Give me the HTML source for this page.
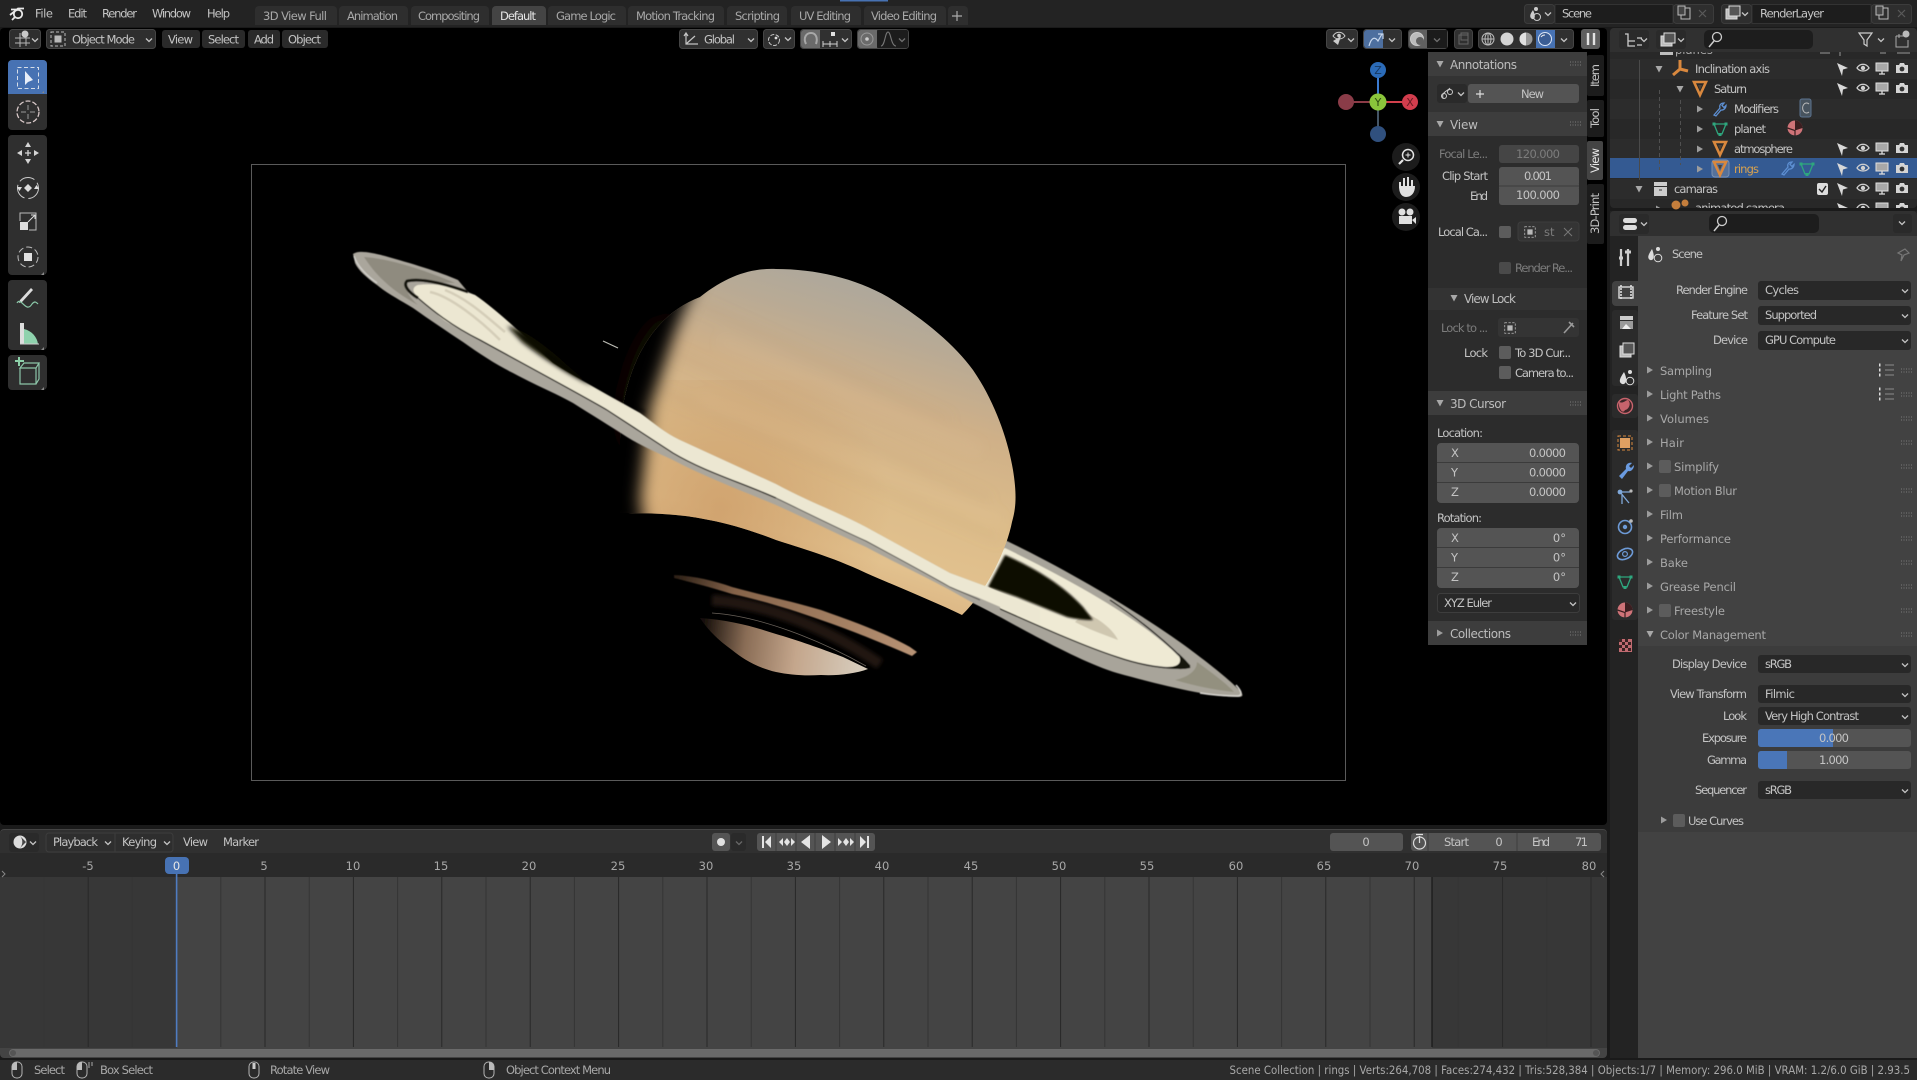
<!DOCTYPE html>
<html><head><meta charset="utf-8"><title>Blender</title>
<style>
html,body{margin:0;padding:0;background:#1a1a1a;width:1917px;height:1080px;overflow:hidden}
svg{display:block}
text{font-family:"DejaVu Sans","Liberation Sans",sans-serif;font-size:11.5px;fill:#c4c4c4}
.d{fill:#7c7c7c}.e{text-anchor:end}.m{text-anchor:middle}.b{fill:#a8a8a8}.w{fill:#e6e6e6}
.h{font-size:12px;fill:#bdbdbd}
</style></head><body>
<svg width="1917" height="1080" viewBox="0 0 1917 1080" xmlns="http://www.w3.org/2000/svg">
<defs>
<path id="chev" d="M-3-1.5L0 1.5 3-1.5" fill="none" stroke="#c4c4c4" stroke-width="1.3"/>
<path id="tr" d="M-3-3.5L3 0-3 3.5z" fill="#9c9c9c"/>
<path id="td" d="M-3.5-3H3.5L0 3.5z" fill="#a8a8a8"/>
<path id="grip" d="M0 0H11M0 3H11" stroke="#7a7a7a" stroke-width="1" stroke-dasharray="1 1.5" fill="none"/>
<g id="eye"><path d="M-6 0C-3-5 3-5 6 0C3 4 -3 4-6 0Z" fill="none" stroke="#d0d0d0" stroke-width="1.3"/><circle r="2.2" fill="#d0d0d0"/></g>
<g id="mon"><path d="M-6-5H6V3H-6Z" fill="#a8a8a8" stroke="#e0e0e0"/><path d="M-3 6H3M0 3V6" stroke="#ddd" stroke-width="1.3"/></g>
<g id="cam"><path d="M-6-3H-3L-2-5H2L3-3H6V5H-6Z" fill="#d4d4d4"/><circle cy="1" r="2.4" fill="#333"/></g>
<path id="arr" d="M-5-6L6-1 1 0.5 0 7Z" fill="#d8d8d8"/>
<g id="ntri"><path d="M-6-6H6L0 7Z" fill="none" stroke="#d9883e" stroke-width="2.6"/><path d="M-2-3H2L0 2Z" fill="#4a4038"/></g>
<g id="mesh"><path d="M-6-5H6L2 5H-2Z" fill="none" stroke="#2ea77e" stroke-width="1.3"/><rect x="-7.5" y="-6.5" width="3" height="3" fill="#2ea77e"/><rect x="4.5" y="-6.5" width="3" height="3" fill="#2ea77e"/><rect x="-1.5" y="4" width="3" height="3" fill="#2ea77e"/></g>
<g id="wr"><path d="M-5 6L1-1C0-4 2-6 5-6L3-3.5 5-1.5 7-3.5C7-.5 4 1.5 2 1L-3 7Z" fill="none" stroke="#5d8fd2" stroke-width="1.3" transform="translate(-1 0)"/></g>
<g id="list"><path d="M0 0H1.5M0 5H1.5M0 10H1.5" stroke="#ddd" stroke-width="3"/><path d="M6 0H15M6 5H15M6 10H15" stroke="#8c8c8c"/></g>
<g id="selbox"><path d="M-7-7H7V7H-7Z" fill="none" stroke="#bbb" stroke-dasharray="3 2"/><rect x="-3.5" y="-3.5" width="7" height="7" fill="#b9b9b9"/></g>
<g id="mouse"><rect x="-5" y="-8" width="10" height="16" rx="4.5" fill="none" stroke="#b4b4b4"/></g>
<g id="matl"><circle r="7.5" fill="#cf7378"/><path d="M0-7.5A7.5 7.5 0 0 1 7.5 0L0 2.5Z" fill="#3a1e20"/><path d="M-7.5 0L0 2.5V7.5" fill="none" stroke="#3a1e20" stroke-width="1.2"/></g>
<linearGradient id="pg" gradientUnits="userSpaceOnUse" x1="900" y1="280" x2="800" y2="610"><stop offset="0" stop-color="#aaa79e"/><stop offset=".16" stop-color="#b8aa95"/><stop offset=".36" stop-color="#cfb088"/><stop offset=".6" stop-color="#dcbc8a"/><stop offset=".8" stop-color="#e2c18e"/><stop offset="1" stop-color="#d5ab7a"/></linearGradient>
<radialGradient id="po" gradientUnits="userSpaceOnUse" cx="720" cy="510" r="170"><stop offset="0" stop-color="#c99762" stop-opacity=".7"/><stop offset="1" stop-color="#c99762" stop-opacity="0"/></radialGradient>
<linearGradient id="lg" gradientUnits="userSpaceOnUse" x1="700" y1="640" x2="860" y2="660"><stop offset="0" stop-color="#120c08"/><stop offset=".28" stop-color="#8a6d56"/><stop offset=".6" stop-color="#c4a68c"/><stop offset="1" stop-color="#d6cbbb"/></linearGradient>
<linearGradient id="sg" gradientUnits="userSpaceOnUse" x1="674" y1="575" x2="917" y2="652"><stop offset="0" stop-color="#2a1e15"/><stop offset=".25" stop-color="#86644a"/><stop offset="1" stop-color="#b89375"/></linearGradient>
<filter id="b12" x="-50%" y="-50%" width="200%" height="200%"><feGaussianBlur stdDeviation="12"/></filter>
<filter id="b8" x="-50%" y="-50%" width="200%" height="200%"><feGaussianBlur stdDeviation="8"/></filter>
<filter id="b4" x="-50%" y="-50%" width="200%" height="200%"><feGaussianBlur stdDeviation="6"/></filter>
<filter id="b2" x="-50%" y="-50%" width="200%" height="200%"><feGaussianBlur stdDeviation="2"/></filter>
<filter id="b15" x="-20%" y="-20%" width="140%" height="140%"><feGaussianBlur stdDeviation="1.5"/></filter>
<filter id="b1" x="-10%" y="-10%" width="120%" height="120%"><feGaussianBlur stdDeviation="1"/></filter>
<filter id="b05" x="-5%" y="-10%" width="110%" height="120%"><feGaussianBlur stdDeviation=".6"/></filter>
<clipPath id="pc"><path d="M620 440C620 390 640 320 700 297C728 275 752 268 776 269C815 269 855 278 888 297C925 320 955 345 973 370C995 402 1008 440 1013 470C1017 495 1016 508 1012 522C1007 548 988 590 962 615C935 602 905 590 866 573C830 556 800 548 776 540C750 530 730 524 709 520C690 516 670 513 620 513Z"/></clipPath>
<clipPath id="lc"><path d="M700 618C730 620 755 627 776 634C800 641 825 650 843 657L868 669C855 674 835 676 821 675C805 676 790 675 776 672C755 667 742 658 732 650C718 640 708 630 700 618Z"/></clipPath>
</defs>

<rect width="1917" height="1080" fill="#1a1a1a"/>
<!-- viewport -->
<rect x="0" y="28" width="1607" height="797" rx="4" fill="#000"/>
<rect x="251.5" y="164.5" width="1094" height="616" fill="none" stroke="#5a5a5a"/>

<!-- Saturn -->
<ellipse cx="652" cy="385" rx="26" ry="70" fill="#170b05" filter="url(#b12)" transform="rotate(15 652 385)"/>
<!-- right far ring -->
<g filter="url(#b05)">
<path d="M990 533C1060 565 1150 618 1200 657C1220 672 1235 685 1241 692Q1245 697 1238 697C1210 697 1160 685 1117 673C1080 662 1020 628 973 602Z" fill="#a8a49a"/>
<path d="M1197 662C1215 675 1228 685 1234 692C1215 690 1195 686 1175 680C1185 678 1197 672 1197 662Z" fill="#93907f"/>
<path d="M1236 685Q1245 695 1238 696C1225 696 1212 695 1200 693" fill="none" stroke="#d8d6d0" stroke-width="1.5"/>
<path d="M1005 548C1060 575 1130 612 1172 650C1182 660 1187 664 1180 667C1150 668 1120 658 1090 647C1050 632 1010 614 977 597L950 586L950 573Z" fill="#efead4"/>
<path d="M1085 612C1100 620 1112 628 1118 640C1105 635 1090 630 1075 622Z" fill="#cfc7b0"/>
<path d="M1110 600C1140 620 1165 640 1190 666" fill="none" stroke="#171513" stroke-width="1.3"/>
<path d="M1190 667C1170 671 1140 665 1117 657C1080 645 1030 622 980 600" fill="none" stroke="#1c1a18" stroke-width="1.3"/>
<path d="M1178 653C1186 660 1192 667 1190 668C1182 670 1172 669 1166 667C1176 667 1184 665 1178 653Z" fill="#141210"/>
</g>
<path d="M1005 555C1030 566 1060 582 1083 607L1093 620C1085 620 1076 619 1067 617L1017 597L988 587Z" fill="#090706" filter="url(#b1)"/>
<!-- planet -->
<g clip-path="url(#pc)">
<rect x="610" y="250" width="420" height="380" fill="url(#pg)"/>
<rect x="610" y="380" width="320" height="240" fill="url(#po)"/>
<g fill="none" filter="url(#b4)">
<path d="M690 300L950 420M670 350L990 500M660 390L1000 540" stroke="#b48c68" stroke-opacity=".14" stroke-width="7"/>
<path d="M700 400L1000 520M720 340L980 450" stroke="#ead2a6" stroke-opacity=".1" stroke-width="10"/>
</g>
<path d="M550 230L722 230C708 260 690 290 672 340L650 407L640 500L645 530L550 530Z" fill="#000" filter="url(#b8)"/>
</g>
<!-- left ring and near band -->
<g filter="url(#b05)">
<path d="M353 254C358 250 370 252 385 256C410 263 440 272 458 280L468 292L475 295C500 312 530 342 553 363C580 380 610 396 640 413C655 424 665 433 680 440L776 484C805 500 840 513 866 527L950 573L988 587L1000 600L1000 616L973 603L950 590C920 574 890 560 866 547C835 533 805 518 776 505C745 492 705 477 673 460C655 452 640 445 627 437C610 426 592 415 573 403C553 392 533 384 513 373C495 364 480 354 463 342C445 330 430 320 413 308C400 300 388 294 377 285C367 278 358 270 355 263Z" fill="#aaa69c"/>
<path d="M364 257C385 258 420 268 455 283L407 281C402 288 412 300 418 305C400 295 380 282 364 257Z" fill="#8f8b7f"/>
<path d="M354 256C357 266 367 276 377 283" fill="none" stroke="#cfcdc8" stroke-width="1.5"/>
<path d="M418 285C435 283 452 286 468 293L475 295C500 312 530 342 553 363C580 380 610 396 640 413C655 424 665 433 680 440L776 484C805 500 840 513 866 527L950 573L988 587L1040 610L1040 624L977 597L950 587C920 570 890 554 866 541C835 527 805 512 776 498C740 482 705 472 673 453C650 438 630 425 607 410C585 397 562 385 540 373C520 362 500 352 480 340C465 332 450 325 440 317C432 310 425 304 418 297C412 292 412 287 418 285Z" fill="#ece7d2"/>
<path d="M430 292C450 296 480 320 500 340M445 290C470 300 490 320 505 332" fill="none" stroke="#d4cdb8" stroke-width="2.5"/>
<path d="M468 292C440 282 420 278 407 281C403 285 408 292 418 298" fill="none" stroke="#141210" stroke-width="3"/>
<path d="M418 298C432 310 450 325 480 340C520 362 585 397 607 410C630 425 650 438 673 453C705 472 740 482 776 498" fill="none" stroke="#1c1a18" stroke-width="1.3"/>
<path d="M776 498C805 512 835 527 866 541C890 554 920 570 950 587L980 600" fill="none" stroke="#5c5a54" stroke-width="1"/>
</g>
<path d="M507 326C525 330 540 342 556 355C570 368 585 380 592 386C575 378 545 360 522 342Z" fill="#0a0806" filter="url(#b2)"/>
<path d="M545 352C570 372 610 394 645 412" fill="none" stroke="#000" stroke-width="2" filter="url(#b15)" opacity=".7"/>
<path d="M603 341L618 348" stroke="#bdbdb5" stroke-width="1.2"/>
<!-- lower planet -->
<path d="M712 600C770 604 830 630 880 664" fill="none" stroke="#2a1e16" stroke-width="11" opacity=".8" filter="url(#b2)"/>
<g clip-path="url(#lc)"><rect x="695" y="610" width="180" height="70" fill="url(#lg)" filter="url(#b1)"/></g>
<path d="M674 575C695 576 715 581 732 587C765 596 795 602 821 610C855 622 885 633 910 647L917 652L912 656C880 642 850 630 821 620C790 609 760 600 732 594C710 587 690 582 674 578Z" fill="url(#sg)" filter="url(#b05)"/>
<path d="M712 613C760 616 820 640 866 666" fill="none" stroke="#6a625a" stroke-width=".8"/>

<!-- top bar -->
<rect x="0" y="0" width="1917" height="27" fill="#232323"/>
<rect x="840" y="0" width="48" height="1.5" fill="#4772b3"/>
<g fill="none" stroke="#e8e8e8" stroke-width="1.8"><circle cx="18" cy="14" r="4.2"/><path d="M10 15L18 8.5H24M11 9.5H17M12 20L15 17"/></g>
<text x="35" y="17.5" textLength="18">File</text><text x="68" y="17.5" textLength="19">Edit</text><text x="102" y="17.5" textLength="35">Render</text><text x="152" y="17.5" textLength="39">Window</text><text x="207" y="17.5" textLength="23">Help</text>
<g fill="#2e2e2e">
<path d="M255 10a4 4 0 0 1 4-4h74a4 4 0 0 1 4 4v15h-82z"/><path d="M339 10a4 4 0 0 1 4-4h61a4 4 0 0 1 4 4v15h-69z"/><path d="M411 10a4 4 0 0 1 4-4h70a4 4 0 0 1 4 4v15h-78z"/><path d="M548 10a4 4 0 0 1 4-4h70a4 4 0 0 1 4 4v15h-78z"/><path d="M628 10a4 4 0 0 1 4-4h88a4 4 0 0 1 4 4v15h-96z"/><path d="M727 10a4 4 0 0 1 4-4h52a4 4 0 0 1 4 4v15h-60z"/><path d="M791 10a4 4 0 0 1 4-4h62a4 4 0 0 1 4 4v15h-70z"/><path d="M864 10a4 4 0 0 1 4-4h74a4 4 0 0 1 4 4v15h-82z"/><path d="M948 10a4 4 0 0 1 4-4h12a4 4 0 0 1 4 4v15h-20z"/>
</g>
<path d="M492 10a4 4 0 0 1 4-4h46a4 4 0 0 1 4 4v15h-54z" fill="#444"/>
<g>
<text class="b" x="263" y="20" textLength="64">3D View Full</text><text class="b" x="347" y="20" textLength="51">Animation</text><text class="b" x="418" y="20" textLength="62">Compositing</text><text class="w" x="500" y="20" textLength="36">Default</text><text class="b" x="556" y="20" textLength="60">Game Logic</text><text class="b" x="636" y="20" textLength="79">Motion Tracking</text><text class="b" x="735" y="20" textLength="45">Scripting</text><text class="b" x="799" y="20" textLength="52">UV Editing</text><text class="b" x="871" y="20" textLength="66">Video Editing</text>
</g>
<path d="M957 11V21M952 16H962" stroke="#aaa" stroke-width="1.2"/>
<!-- scene selector -->
<rect x="1524.5" y="4.5" width="30" height="19" rx="3" fill="#2e2e2e" stroke="#3c3c3c"/><rect x="1555" y="4.5" width="118" height="19" fill="#1d1d1d" stroke="#333"/><rect x="1673.5" y="4.5" width="40" height="19" rx="3" fill="#2e2e2e" stroke="#3c3c3c"/>
<path d="M1533 10C1530 14 1529 17 1532 19C1535 20 1536 16 1533 10Z" fill="#ccc"/><circle cx="1536" cy="9" r="2" fill="#ccc"/><circle cx="1537" cy="17" r="3.5" fill="none" stroke="#ccc"/><use href="#chev" x="1548" y="14"/>
<text x="1562" y="17.5" textLength="30">Scene</text>
<rect x="1681" y="8" width="9" height="11" fill="none" stroke="#bbb"/><rect x="1678" y="6" width="7" height="9" fill="#444" stroke="#bbb"/><path d="M1699 10L1706 17M1706 10L1699 17" stroke="#5a5a5a" stroke-width="1.2"/>
<rect x="1721.5" y="4.5" width="30" height="19" rx="3" fill="#2e2e2e" stroke="#3c3c3c"/><rect x="1752" y="4.5" width="119" height="19" fill="#1d1d1d" stroke="#333"/><rect x="1871.5" y="4.5" width="40" height="19" rx="3" fill="#2e2e2e" stroke="#3c3c3c"/>
<rect x="1726" y="9" width="11" height="10" fill="#bbb" stroke="#ddd"/><rect x="1729" y="6" width="11" height="10" fill="#555" stroke="#ddd"/><use href="#chev" x="1745" y="14"/>
<text x="1760" y="17.5" textLength="64">RenderLayer</text>
<rect x="1879" y="8" width="9" height="11" fill="none" stroke="#bbb"/><rect x="1876" y="6" width="7" height="9" fill="#444" stroke="#bbb"/><path d="M1898 10L1905 17M1905 10L1898 17" stroke="#5a5a5a" stroke-width="1.2"/>

<!-- tool header -->
<g fill="#2e2e2e" stroke="#454545"><rect x="9.5" y="29.5" width="31" height="19" rx="3"/><rect x="46.5" y="29.5" width="109" height="19" rx="3"/></g>
<path d="M15 38H30M15 43H30M20 33V47M26 36V46" stroke="#b5b5b5"/><circle cx="25" cy="34" r="3.5" fill="#c8c8c8"/><use href="#chev" x="35" y="40"/>
<use href="#selbox" transform="translate(58 39)"/><text x="72" y="43.5" textLength="63">Object Mode</text><use href="#chev" x="149" y="40"/>
<g fill="#2a2a2a"><rect x="162" y="30" width="38" height="18" rx="3"/><rect x="202" y="30" width="43" height="18" rx="3"/><rect x="248" y="30" width="32" height="18" rx="3"/><rect x="282" y="30" width="46" height="18" rx="3"/></g>
<text x="168" y="43.5" textLength="25">View</text><text x="208" y="43.5" textLength="31">Select</text><text x="254" y="43.5" textLength="20">Add</text><text x="288" y="43.5" textLength="33">Object</text>
<g fill="#303030" stroke="#454545"><rect x="679.5" y="29.5" width="78" height="19" rx="3"/><rect x="763.5" y="29.5" width="31" height="19" rx="3"/><rect x="800.5" y="29.5" width="51" height="19" rx="3"/><rect x="857.5" y="29.5" width="51" height="19" rx="3"/></g>
<path d="M801 33a3 3 0 0 1 3-3h16v18h-16a3 3 0 0 1-3-3z" fill="#6a6a6a"/><path d="M858 33a3 3 0 0 1 3-3h16v18h-16a3 3 0 0 1-3-3z" fill="#6a6a6a"/><rect x="877" y="30" width="31" height="18" rx="2" fill="#1c1c1c"/>
<path d="M686 33V44H698M686 44L695 36M684 36L686 33 688 36" fill="none" stroke="#c4c4c4" stroke-width="1.2"/><text x="704" y="43.5" textLength="31">Global</text><use href="#chev" x="751" y="40"/>
<circle cx="774" cy="40" r="5.5" fill="none" stroke="#c8c8c8" stroke-dasharray="4 1.5"/><circle cx="776" cy="38" r="1.4" fill="#ddd"/><use href="#chev" x="788" y="39"/>
<path d="M806 44C803 38 806 33 811 33C816 33 818 38 816 44" fill="none" stroke="#a8a8a8" stroke-width="2"/>
<path d="M823 41V47M837 41V47M830 41V47M823 44H837" stroke="#d0d0d0"/><rect x="831" y="32" width="4" height="4" fill="#e0e0e0"/><use href="#chev" x="845" y="40"/>
<circle cx="867" cy="39" r="6" fill="none" stroke="#999"/><circle cx="867" cy="39" r="1.8" fill="#ccc"/><path d="M881 46C885 46 885 32 888 32C891 32 891 46 896 46" fill="none" stroke="#777" stroke-width="1.1"/><use href="#chev" x="902" y="40" opacity=".5"/>
<!-- right header -->
<g fill="#303030" stroke="#454545"><rect x="1326.5" y="29.5" width="31" height="19" rx="3"/><rect x="1363.5" y="29.5" width="38" height="19" rx="3"/><rect x="1408.5" y="29.5" width="39" height="19" rx="3"/><rect x="1454.5" y="29.5" width="18" height="19" rx="3"/><rect x="1478.5" y="29.5" width="95" height="19" rx="3"/></g>
<path d="M1364 33a3 3 0 0 1 3-3h16v18h-16a3 3 0 0 1-3-3z" fill="#4d6f9f"/>
<path d="M1409 33a3 3 0 0 1 3-3h15v18h-15a3 3 0 0 1-3-3z" fill="#606060"/><rect x="1427" y="30" width="20" height="18" fill="#1b1b1b"/>
<path d="M1333 41L1338 45 1341 36Z" fill="#ccc"/><path d="M1333 36C1336 31 1342 31 1345 36C1342 40 1336 40 1333 36Z" fill="none" stroke="#ccc"/><circle cx="1339" cy="35.5" r="1.8" fill="#ccc"/><use href="#chev" x="1351" y="40"/>
<path d="M1369 46C1372 35 1376 38 1378 41L1382 34M1378 34H1383V39" fill="none" stroke="#c8d8ee" stroke-width="1.2"/><use href="#chev" x="1392" y="40"/>
<circle cx="1417" cy="39" r="6.5" fill="#bbb" stroke="#ccc"/><circle cx="1420" cy="41" r="4" fill="#606060"/><use href="#chev" x="1437" y="40" opacity=".5"/>
<rect x="1459" y="35" width="9" height="9" fill="none" stroke="#666"/><rect x="1461" y="33" width="7" height="7" fill="none" stroke="#666"/>
<rect x="1536" y="30" width="19" height="18" fill="#4772b3"/>
<circle cx="1488" cy="39" r="6" fill="none" stroke="#bbb"/><path d="M1482 39H1494M1488 33V45" stroke="#bbb"/><ellipse cx="1488" cy="39" rx="3" ry="6" fill="none" stroke="#bbb"/>
<circle cx="1507" cy="39" r="6.5" fill="#d4d4d4"/><circle cx="1526" cy="39" r="6.5" fill="#999"/><path d="M1526 32.5A6.5 6.5 0 0 0 1526 45.5Z" fill="#e0e0e0"/>
<circle cx="1545" cy="39" r="6.5" fill="#3a5d94" stroke="#dbe5f5"/><path d="M1541 37A5 5 0 0 1 1545 35" fill="none" stroke="#eee"/><use href="#chev" x="1564" y="40"/>
<rect x="1581" y="29" width="19" height="20" rx="3" fill="#5e5e5e"/><path d="M1588 33V45M1594 33V45" stroke="#e2e2e2" stroke-width="2.4"/>

<!-- tool shelf -->
<rect x="8" y="60" width="39" height="70" rx="4" fill="#2f2f2f"/>
<path d="M8 64a4 4 0 0 1 4-4h31a4 4 0 0 1 4 4v30h-39z" fill="#4772b3"/>
<rect x="17.5" y="67.5" width="21" height="21" fill="none" stroke="#d5dde8" stroke-dasharray="4 2.5"/><path d="M25 71L25 85 28 82 33 80Z" fill="#e8eef8"/>
<circle cx="28" cy="112" r="11" fill="none" stroke="#d8c8c8" stroke-dasharray="5 2" stroke-width="1.3"/><path d="M28 105V110M28 114V119M21 112H26M30 112H35" stroke="#999"/>
<rect x="8" y="135" width="39" height="140" rx="4" fill="#2f2f2f"/>
<path d="M28 142L25 147H31ZM28 164L25 159H31ZM17 153L22 150V156ZM39 153L34 150V156Z" fill="#d4d4d4"/><path d="M25 153H31M28 150V156" stroke="#d4d4d4" stroke-width="1.3"/>
<circle cx="28" cy="188" r="10.5" fill="none" stroke="#ccc" stroke-dasharray="16 4"/><path d="M28 184L32 188 28 192 24 188Z" fill="#ddd"/><path d="M17 187H22L19.5 191ZM34 189H39L36.5 185Z" fill="#ddd"/>
<rect x="20" y="222" width="8" height="8" fill="#ddd"/><path d="M20 221V213H36V230H29" fill="none" stroke="#bbb"/><path d="M28 222L35 215M31 215H35V219" fill="none" stroke="#ddd"/>
<circle cx="28" cy="257" r="10" fill="none" stroke="#bbb" stroke-dasharray="6 3"/><rect x="24" y="253" width="8" height="8" fill="#e0e0e0"/>
<rect x="8" y="280" width="39" height="70" rx="4" fill="#2f2f2f"/>
<path d="M20 300L31 288 33 290 22 302 19 303Z" fill="#ddd"/><path d="M17 303C21 296 26 314 32 304C35 300 37 303 38 304" fill="none" stroke="#8ac8a8" stroke-width="1.2"/>
<path d="M20 323H24V344H20Z" fill="#ddd"/><path d="M24 329C32 331 37 337 38 344H24Z" fill="#8fd2ad"/><path d="M20 344H39" stroke="#ccc"/>
<rect x="8" y="355" width="39" height="35" rx="4" fill="#2f2f2f"/>
<path d="M20 368H36L39 363H24ZM20 368V384H36V368M36 384L39 379V363" fill="none" stroke="#8cc5a8" stroke-width="1.2"/><path d="M19 357V366M15 361H24" stroke="#8cd0a8" stroke-width="2"/>
<g fill="#888"><path d="M44 91L42 93H44ZM44 272L41 275H44ZM44 347L41 350H44ZM44 387L41 390H44Z"/></g>

<!-- gizmo -->
<path d="M1378 70V134M1346 102H1410" stroke="#456" stroke-width="2"/><path d="M1378 78V102" stroke="#3b7bd0" stroke-width="2"/><path d="M1378 102H1402" stroke="#d2404c" stroke-width="2"/><path d="M1354 102H1378" stroke="#8c3b47" stroke-width="2"/>
<circle cx="1378" cy="70" r="8" fill="#2b6bb8"/><circle cx="1378" cy="134" r="8" fill="#30507e"/><circle cx="1346" cy="102" r="8" fill="#8a3c48"/><circle cx="1410" cy="102" r="8" fill="#d23d4d"/><circle cx="1378" cy="102" r="8.5" fill="#8ac53b"/>
<text class="m" x="1378" y="74" style="fill:#17375f;font-size:11px">Z</text><text class="m" x="1410" y="106" style="fill:#641a22;font-size:11px">X</text><text class="m" x="1378" y="106" style="fill:#2d4a10;font-size:11px">Y</text>
<g fill="#1c1c1c"><circle cx="1406" cy="157" r="14"/><circle cx="1406" cy="187" r="14"/><circle cx="1406" cy="217" r="14"/></g>
<circle cx="1408" cy="155" r="5.5" fill="none" stroke="#e4e4e4" stroke-width="1.5"/><path d="M1403 160L1399 164" stroke="#e4e4e4" stroke-width="2.2"/><path d="M1405.5 155H1410.5M1408 152.5V157.5" stroke="#e4e4e4"/>
<path d="M1400 188V182M1404 186V178M1408 186V177M1412 187V180M1400 186C1400 192 1402 196 1406 196C1411 196 1414 192 1414 186" stroke="#e0e0e0" stroke-width="2" fill="#e0e0e0"/>
<circle cx="1402" cy="212" r="3.5" fill="#e0e0e0"/><circle cx="1410" cy="212" r="3.5" fill="#e0e0e0"/><rect x="1399" y="216" width="13" height="8" fill="#e0e0e0"/><path d="M1412 220L1416 217V224Z" fill="#e0e0e0"/>

<!-- N panel tabs -->
<g fill="#1c1c1c"><rect x="1587" y="55" width="17" height="41" rx="2"/><rect x="1587" y="100" width="17" height="37" rx="2"/><rect x="1587" y="184" width="17" height="60" rx="2"/></g>
<rect x="1587" y="141" width="16" height="39" rx="2" fill="#444"/>
<text transform="translate(1599 87) rotate(-90)" textLength="23">Item</text>
<text transform="translate(1599 128) rotate(-90)" textLength="20">Tool</text>
<text class="w" transform="translate(1599 173) rotate(-90)" textLength="25">View</text>
<text transform="translate(1599 234) rotate(-90)" textLength="41">3D-Print</text>

<!-- N panel -->
<rect x="1428" y="52" width="159" height="593" fill="#2c2c2c"/>
<g fill="#3d3d3d"><rect x="1428" y="52" width="159" height="24"/><rect x="1428" y="112" width="159" height="24"/><rect x="1428" y="391" width="159" height="24"/><rect x="1428" y="621" width="159" height="24"/></g>
<rect x="1428" y="76" width="159" height="36" fill="#333"/>
<rect x="1428" y="288" width="159" height="22" fill="#333"/>
<use href="#td" x="1440" y="64"/><text class="h" x="1450" y="69" textLength="67">Annotations</text><use href="#grip" x="1570" y="62"/>
<rect x="1437" y="84" width="30" height="19" rx="3" fill="#2a2a2a"/><path d="M1443 98C1441 92 1448 91 1450 88" fill="none" stroke="#ccc"/><circle cx="1444" cy="96" r="2.5" fill="none" stroke="#ccc"/><circle cx="1450" cy="92" r="2.5" fill="none" stroke="#ccc"/><use href="#chev" x="1461" y="94"/>
<rect x="1468" y="84" width="111" height="19" rx="3" fill="#545454"/><path d="M1480 90V98M1476 94H1484" stroke="#ddd" stroke-width="1.2"/><text x="1521" y="98" textLength="23">New</text>
<use href="#td" x="1440" y="124"/><text class="h" x="1450" y="129" textLength="28">View</text><use href="#grip" x="1570" y="122"/>
<text class="e d" x="1488" y="158" textLength="49">Focal Le...</text><rect x="1499" y="145" width="80" height="18" rx="3" fill="#454545"/><text class="m d" x="1538" y="158" textLength="44">120.000</text>
<text class="e" x="1488" y="180" textLength="46">Clip Start</text><text class="e" x="1488" y="200" textLength="18">End</text>
<rect x="1499" y="167" width="80" height="19" rx="3" fill="#545454"/><rect x="1499" y="186" width="80" height="19" rx="3" fill="#545454"/><rect x="1499" y="184" width="80" height="4" fill="#545454"/><path d="M1499 186H1579" stroke="#3b3b3b"/>
<text class="m" x="1538" y="180" textLength="28">0.001</text><text class="m" x="1538" y="199" textLength="44">100.000</text>
<text class="e" x="1488" y="236" textLength="50">Local Ca...</text><rect x="1499" y="226" width="12" height="12" rx="2" fill="#5c5c5c"/>
<rect x="1518" y="222" width="61" height="19" rx="3" fill="#343434" stroke="#3d3d3d"/><use href="#selbox" transform="translate(1530 232) scale(.75)"/><text class="d" x="1544" y="236">st</text><path d="M1564 228L1572 236M1572 228L1564 236" stroke="#777"/>
<rect x="1499" y="262" width="12" height="12" rx="2" fill="#4a4a4a"/><text class="d" x="1515" y="272" textLength="58">Render Re...</text>
<use href="#td" x="1454" y="298"/><text x="1464" y="303" textLength="52" class="h">View Lock</text>
<text class="e d" x="1488" y="332" textLength="47">Lock to ...</text><rect x="1498" y="318" width="81" height="19" rx="3" fill="#343434"/><use href="#selbox" transform="translate(1510 328) scale(.75)"/><path d="M1564 333L1573 323M1569 322L1574 327" stroke="#999" stroke-width="1.6"/>
<text class="e" x="1488" y="357" textLength="24">Lock</text><rect x="1499" y="346" width="12" height="13" rx="2" fill="#5c5c5c"/><text x="1515" y="357" textLength="56">To 3D Cur...</text>
<rect x="1499" y="366" width="12" height="13" rx="2" fill="#5c5c5c"/><text x="1515" y="377" textLength="59">Camera to...</text>
<use href="#td" x="1440" y="403"/><text class="h" x="1450" y="408" textLength="56">3D Cursor</text><use href="#grip" x="1570" y="402"/>
<text x="1437" y="437" textLength="46">Location:</text>
<rect x="1437" y="443" width="142" height="60" rx="4" fill="#545454"/><path d="M1437 462.5H1579M1437 482.5H1579" stroke="#3b3b3b"/>
<text x="1451" y="457">X</text><text x="1451" y="476.5">Y</text><text x="1451" y="496">Z</text>
<text class="e" x="1566" y="457" textLength="37">0.0000</text><text class="e" x="1566" y="476.5" textLength="37">0.0000</text><text class="e" x="1566" y="496" textLength="37">0.0000</text>
<text x="1437" y="522" textLength="45">Rotation:</text>
<rect x="1437" y="528" width="142" height="60" rx="4" fill="#545454"/><path d="M1437 547.5H1579M1437 567.5H1579" stroke="#3b3b3b"/>
<text x="1451" y="542">X</text><text x="1451" y="561.5">Y</text><text x="1451" y="581">Z</text>
<text class="e" x="1566" y="542">0°</text><text class="e" x="1566" y="561.5">0°</text><text class="e" x="1566" y="581">0°</text>
<rect x="1437.5" y="593.5" width="142" height="19" rx="3" fill="#282828" stroke="#3d3d3d"/><text x="1444" y="607" textLength="48">XYZ Euler</text><use href="#chev" x="1573" y="604"/>
<use href="#tr" x="1440" y="633"/><text class="h" x="1450" y="638" textLength="61">Collections</text><use href="#grip" x="1570" y="632"/>

<!-- outliner -->
<rect x="1610" y="28" width="307" height="180" rx="4" fill="#282828"/>
<g fill="#2c2c2c"><rect x="1610" y="59" width="307" height="20"/><rect x="1610" y="99" width="307" height="20"/><rect x="1610" y="139" width="307" height="20"/><rect x="1610" y="179" width="307" height="20"/></g>
<rect x="1610" y="158" width="307" height="20" fill="#345a92"/>
<rect x="1712" y="160" width="17" height="17" rx="3" fill="#55719a" stroke="#7a90b0"/>
<path d="M1639.5 60V180" stroke="#4a4a4a"/><path d="M1659.5 90V170M1680.5 100V165" stroke="#505050" stroke-dasharray="4 3"/>
<rect x="1660" y="50" width="13" height="5" fill="#bdbdbd"/><text x="1675" y="54" class="b">planes</text>
<path d="M1820 53H1830M1840 52V56M1880 53H1886M1897 53H1910" stroke="#999"/>
<use href="#td" x="1659" y="69"/>
<path d="M1680 60V69L1673 75M1680 69L1688 71" fill="none" stroke="#d9883e" stroke-width="3"/><text x="1695" y="73" textLength="75">Inclination axis</text>
<use href="#td" x="1680" y="89"/><use href="#ntri" x="1700" y="88"/><text x="1714" y="93" textLength="33">Saturn</text>
<use href="#tr" x="1700" y="109"/><use href="#wr" x="1720" y="109"/><text x="1734" y="113" textLength="45">Modifiers</text>
<rect x="1800" y="99" width="11" height="18" rx="2" fill="#47535e" stroke="#5b7390"/><path d="M1809 104A4 5 0 1 0 1809 112" fill="none" stroke="#bbb"/>
<use href="#tr" x="1700" y="129"/><use href="#mesh" x="1720" y="129"/><text x="1734" y="133" textLength="32">planet</text>
<use href="#matl" x="1795" y="128"/>
<use href="#tr" x="1700" y="149"/><use href="#ntri" x="1720" y="148"/><text x="1734" y="153" textLength="59">atmosphere</text>
<use href="#tr" x="1700" y="169"/><use href="#ntri" x="1720" y="168"/><text x="1734" y="173" textLength="25" style="fill:#d9a24e">rings</text>
<use href="#wr" x="1788" y="168"/><use href="#mesh" x="1807" y="169"/>
<use href="#td" x="1639" y="189"/><rect x="1654" y="182" width="13" height="4" fill="#ccc"/><path d="M1654 187H1667V196H1654Z" fill="#ccc"/><path d="M1659 190H1662" stroke="#333"/><text x="1674" y="193" textLength="44">camaras</text>
<rect x="1817" y="183" width="11" height="12" rx="2" fill="#ddd"/><path d="M1819 189L1822 192 1826 186" fill="none" stroke="#222" stroke-width="1.4"/>
<g>
<use href="#arr" x="1842" y="69"/><use href="#eye" x="1863" y="68"/><use href="#mon" x="1882" y="68"/><use href="#cam" x="1902" y="68"/>
<use href="#arr" x="1842" y="89"/><use href="#eye" x="1863" y="88"/><use href="#mon" x="1882" y="88"/><use href="#cam" x="1902" y="88"/>
<use href="#arr" x="1842" y="149"/><use href="#eye" x="1863" y="148"/><use href="#mon" x="1882" y="148"/><use href="#cam" x="1902" y="148"/>
<use href="#arr" x="1842" y="169"/><use href="#eye" x="1863" y="168"/><use href="#mon" x="1882" y="168"/><use href="#cam" x="1902" y="168"/>
<use href="#arr" x="1842" y="189"/><use href="#eye" x="1863" y="188"/><use href="#mon" x="1882" y="188"/><use href="#cam" x="1902" y="188"/>
</g>
<circle cx="1676" cy="205" r="4.5" fill="#c47e3c"/><circle cx="1685" cy="203" r="3.5" fill="#c47e3c"/>
<svg x="1610" y="199" width="307" height="9" viewBox="1610 199 307 9">
<text x="1695" y="212" textLength="90">animated camera</text>
<use href="#tr" x="1659" y="209"/>
<use href="#arr" x="1842" y="209"/><use href="#eye" x="1863" y="208"/><use href="#mon" x="1882" y="208"/><use href="#cam" x="1902" y="208"/>
</svg>
<path d="M1610 32a4 4 0 0 1 4-4h299a4 4 0 0 1 4 4v20h-307z" fill="#303030"/>
<rect x="1619" y="30" width="30" height="19" rx="3" fill="#2a2a2a"/><path d="M1625 34H1628V46H1635M1628 41H1635M1637 38H1642M1637 45H1642" fill="none" stroke="#ccc" stroke-width="1.3"/><use href="#chev" x="1644" y="40"/>
<rect x="1656" y="30" width="30" height="19" rx="3" fill="#2a2a2a"/><rect x="1661" y="36" width="11" height="10" fill="#bbb" stroke="#ddd"/><rect x="1664" y="33" width="11" height="10" fill="#555" stroke="#ddd"/><use href="#chev" x="1681" y="40"/>
<rect x="1704" y="30" width="109" height="19" rx="5" fill="#1d1d1d"/><circle cx="1717" cy="37" r="4.5" fill="none" stroke="#ccc" stroke-width="1.3"/><path d="M1714 41L1709 47" stroke="#ccc" stroke-width="1.5"/>
<path d="M1859 33H1872L1867 40V46L1864 44V40Z" fill="none" stroke="#ccc" stroke-width="1.2"/><use href="#chev" x="1881" y="40"/>
<path d="M1896 36H1904M1896 36V47H1908V40M1899 34V38" fill="none" stroke="#aaa"/><circle cx="1906" cy="34" r="3.5" fill="#bbb"/>

<!-- properties -->
<rect x="1610" y="211" width="307" height="847" fill="#232323"/>
<path d="M1610 215a4 4 0 0 1 4-4h299a4 4 0 0 1 4 4v21h-307z" fill="#303030"/>
<rect x="1638" y="236" width="279" height="822" fill="#424242"/>
<rect x="1619" y="214" width="30" height="20" rx="3" fill="#2a2a2a"/><rect x="1623" y="218" width="14" height="5" rx="2.5" fill="#ddd"/><rect x="1623" y="225" width="14" height="5" rx="2.5" fill="#ddd"/><use href="#chev" x="1644" y="224"/>
<rect x="1709" y="214" width="110" height="19" rx="5" fill="#1d1d1d"/><circle cx="1722" cy="221" r="4.5" fill="none" stroke="#ccc" stroke-width="1.3"/><path d="M1719 225L1714 231" stroke="#ccc" stroke-width="1.5"/>
<rect x="1893" y="214" width="19" height="19" rx="3" fill="#2a2a2a"/><use href="#chev" x="1902" y="223"/>
<!-- prop tabs -->
<path d="M1612 285a4 4 0 0 1 4-4h22v25h-22a4 4 0 0 1-4-4z" fill="#424242"/>
<g fill="#2b2b2b"><rect x="1612" y="310" width="26" height="76" rx="3"/><rect x="1612" y="394" width="26" height="24" rx="3"/><rect x="1612" y="430" width="26" height="190" rx="3"/></g>
<path d="M1621 249V266M1628 249V266" stroke="#ccc" stroke-width="2.2"/><path d="M1625 252H1631M1619 258H1623" stroke="#ccc" stroke-width="3"/>
<rect x="1619" y="287" width="14" height="11" fill="none" stroke="#ddd" stroke-width="1.4"/><path d="M1621 285V300M1631 285V300" stroke="#ddd" stroke-width="1.6" stroke-dasharray="2 1"/>
<rect x="1620" y="316" width="13" height="4" fill="#ccc"/><path d="M1620 321H1633V329H1620Z" fill="#9a9a9a"/><path d="M1622 329L1626 324 1631 329" fill="#eee"/>
<rect x="1620" y="346" width="11" height="11" fill="#bbb" stroke="#ddd"/><rect x="1623" y="343" width="11" height="11" fill="#555" stroke="#ddd"/>
<path d="M1624 372C1620 378 1618 382 1622 384C1626 385 1628 380 1624 372Z" fill="#ddd"/><circle cx="1630" cy="372" r="2" fill="#ddd"/><circle cx="1630" cy="381" r="3.8" fill="none" stroke="#ddd"/>
<circle cx="1625" cy="406" r="7.5" fill="#3b2527" stroke="#c7636c" stroke-width="1.4"/><path d="M1619 402C1623 404 1626 400 1628 400C1632 404 1628 410 1625 410C1623 414 1620 410 1619 406Z" fill="#c7636c"/>
<path d="M1618 436H1632V450H1618Z" fill="none" stroke="#d9883e" stroke-dasharray="3 2"/><rect x="1620" y="438" width="10" height="10" fill="#e0a062"/>
<path d="M1619 476L1626 469C1625 465 1628 462 1632 463L1629 466 1631 468 1634 465C1634 470 1630 472 1628 471L1622 479Z" fill="#6a9be0"/>
<path d="M1620 492L1629 503M1630 492L1619 492M1622 504V495" stroke="#7fa7d8" stroke-width="1.3"/><circle cx="1620" cy="492" r="2.4" fill="#7fa7d8"/><circle cx="1631" cy="491" r="1.6" fill="#bbb"/>
<circle cx="1625" cy="527" r="6.5" fill="none" stroke="#6d9ad6" stroke-width="1.6"/><circle cx="1625" cy="527" r="2.2" fill="#6d9ad6"/><circle cx="1631" cy="521" r="1.8" fill="#bbb"/>
<ellipse cx="1625" cy="554" rx="8" ry="5" transform="rotate(-25 1625 554)" fill="none" stroke="#6d9ad6" stroke-width="1.6"/><circle cx="1625" cy="554" r="2.4" fill="none" stroke="#6d9ad6" stroke-width="1.2"/>
<use href="#mesh" x="1625" y="582"/>
<use href="#matl" x="1625" y="610"/>
<rect x="1619" y="639" width="13" height="13" fill="#c06a70"/><path d="M1619 639h3v3h-3zM1625 639h3v3h-3zM1622 642h3v3h-3zM1628 642h3v3h-3zM1619 645h3v3h-3zM1625 645h3v3h-3zM1622 648h3v3h-3zM1628 648h3v3h-3z" fill="#3a2222"/>
<path d="M1652 249C1648 255 1647 258 1650 260C1654 261 1655 256 1652 249Z" fill="#ddd"/><circle cx="1658" cy="249" r="2" fill="#ddd"/><circle cx="1658" cy="258" r="3.8" fill="none" stroke="#ddd"/>
<text x="1672" y="258" textLength="31">Scene</text>
<path d="M1905 249L1909 253 1904 255 1901 261 1902 255 1898 253Z" fill="none" stroke="#777" stroke-width="1.2"/>
<!-- render settings -->
<text class="e" x="1748" y="294" textLength="72">Render Engine</text><text class="e" x="1748" y="319" textLength="57">Feature Set</text><text class="e" x="1748" y="344" textLength="35">Device</text>
<g fill="#282828"><rect x="1758" y="281" width="153" height="19" rx="3"/><rect x="1758" y="306" width="153" height="19" rx="3"/><rect x="1758" y="331" width="153" height="19" rx="3"/></g>
<text x="1765" y="294" textLength="34">Cycles</text><text x="1765" y="319" textLength="52">Supported</text><text x="1765" y="344" textLength="71">GPU Compute</text>
<use href="#chev" x="1905" y="291"/><use href="#chev" x="1905" y="316"/><use href="#chev" x="1905" y="341"/>
<g>
<use href="#tr" x="1650" y="370"/><text class="b" x="1660" y="375" textLength="52">Sampling</text><use href="#list" x="1879" y="365"/><use href="#grip" x="1901" y="369"/>
<use href="#tr" x="1650" y="394"/><text class="b" x="1660" y="399" textLength="61">Light Paths</text><use href="#list" x="1879" y="389"/><use href="#grip" x="1901" y="393"/>
<use href="#tr" x="1650" y="418"/><text class="b" x="1660" y="423" textLength="49">Volumes</text><use href="#grip" x="1901" y="417"/>
<use href="#tr" x="1650" y="442"/><text class="b" x="1660" y="447" textLength="24">Hair</text><use href="#grip" x="1901" y="441"/>
<use href="#tr" x="1650" y="466"/><rect x="1659" y="460" width="12" height="13" rx="2" fill="#5c5c5c"/><text class="b" x="1674" y="471" textLength="45">Simplify</text><use href="#grip" x="1901" y="465"/>
<use href="#tr" x="1650" y="490"/><rect x="1659" y="484" width="12" height="13" rx="2" fill="#5c5c5c"/><text class="b" x="1674" y="495" textLength="63">Motion Blur</text><use href="#grip" x="1901" y="489"/>
<use href="#tr" x="1650" y="514"/><text class="b" x="1660" y="519" textLength="23">Film</text><use href="#grip" x="1901" y="513"/>
<use href="#tr" x="1650" y="538"/><text class="b" x="1660" y="543" textLength="71">Performance</text><use href="#grip" x="1901" y="537"/>
<use href="#tr" x="1650" y="562"/><text class="b" x="1660" y="567" textLength="28">Bake</text><use href="#grip" x="1901" y="561"/>
<use href="#tr" x="1650" y="586"/><text class="b" x="1660" y="591" textLength="76">Grease Pencil</text><use href="#grip" x="1901" y="585"/>
<use href="#tr" x="1650" y="610"/><rect x="1659" y="604" width="12" height="13" rx="2" fill="#5c5c5c"/><text class="b" x="1674" y="615" textLength="51">Freestyle</text><use href="#grip" x="1901" y="609"/>
</g>
<rect x="1638" y="646" width="279" height="186" fill="#3c3c3c"/>
<use href="#td" x="1650" y="634"/><text class="b" x="1660" y="639" textLength="106">Color Management</text><use href="#grip" x="1901" y="633"/>
<g fill="#282828"><rect x="1758" y="655" width="153" height="18" rx="3"/><rect x="1758" y="685" width="153" height="18" rx="3"/><rect x="1758" y="707" width="153" height="18" rx="3"/><rect x="1758" y="781" width="153" height="18" rx="3"/></g>
<use href="#chev" x="1905" y="665"/><use href="#chev" x="1905" y="695"/><use href="#chev" x="1905" y="717"/><use href="#chev" x="1905" y="791"/>
<text class="e" x="1747" y="668" textLength="75">Display Device</text><text x="1765" y="668" textLength="27">sRGB</text>
<text class="e" x="1747" y="698" textLength="77">View Transform</text><text x="1765" y="698" textLength="30">Filmic</text>
<text class="e" x="1747" y="720" textLength="24">Look</text><text x="1765" y="720" textLength="94">Very High Contrast</text>
<text class="e" x="1747" y="742" textLength="45">Exposure</text><rect x="1758" y="729" width="153" height="18" rx="3" fill="#545454"/><path d="M1833 729H1761a3 3 0 0 0-3 3v12a3 3 0 0 0 3 3h72z" fill="#4a76b8"/><text class="m" x="1834" y="742" textLength="30">0.000</text>
<text class="e" x="1747" y="764" textLength="40">Gamma</text><rect x="1758" y="751" width="153" height="18" rx="3" fill="#545454"/><path d="M1787 751H1761a3 3 0 0 0-3 3v12a3 3 0 0 0 3 3h26z" fill="#4a76b8"/><text class="m" x="1834" y="764" textLength="30">1.000</text>
<text class="e" x="1747" y="794" textLength="52">Sequencer</text><text x="1765" y="794" textLength="27">sRGB</text>
<use href="#tr" x="1664" y="820"/><rect x="1673" y="814" width="12" height="13" rx="2" fill="#5c5c5c"/><text x="1688" y="825" textLength="56">Use Curves</text>

<!-- timeline -->
<rect x="0" y="829" width="1607" height="229" rx="4" fill="#444"/>
<path d="M0 834a4 4 0 0 1 4-4h1599a4 4 0 0 1 4 4v19H0z" fill="#303030"/>
<rect x="0" y="853" width="1607" height="24" fill="#2a2a2a"/>
<rect x="0" y="877" width="176.6" height="171" fill="#373737"/><rect x="1432" y="877" width="175" height="171" fill="#373737"/>
<path d="M44 877V1047M132.4 877V1047M220.8 877V1047M309.2 877V1047M397.6 877V1047M486 877V1047M574.4 877V1047M662.8 877V1047M751.2 877V1047M839.6 877V1047M928 877V1047M1016.4 877V1047M1104.8 877V1047M1193.2 877V1047M1281.6 877V1047M1370 877V1047M1458.4 877V1047M1546.8 877V1047" stroke="#353535"/>
<path d="M88.2 877V1047M265 877V1047M353.4 877V1047M441.8 877V1047M530.2 877V1047M618.6 877V1047M707 877V1047M795.4 877V1047M883.8 877V1047M972.2 877V1047M1060.6 877V1047M1149 877V1047M1237.4 877V1047M1325.8 877V1047M1414.2 877V1047M1502.6 877V1047M1591 877V1047" stroke="#282828"/>
<path d="M1432 877V1047" stroke="#181818" stroke-width="1.2"/>
<g>
<text class="m b" x="88" y="870">-5</text><text class="m b" x="264" y="870">5</text><text class="m b" x="353" y="870">10</text><text class="m b" x="441" y="870">15</text><text class="m b" x="529" y="870">20</text><text class="m b" x="618" y="870">25</text><text class="m b" x="706" y="870">30</text><text class="m b" x="794" y="870">35</text><text class="m b" x="882" y="870">40</text><text class="m b" x="971" y="870">45</text><text class="m b" x="1059" y="870">50</text><text class="m b" x="1147" y="870">55</text><text class="m b" x="1236" y="870">60</text><text class="m b" x="1324" y="870">65</text><text class="m b" x="1412" y="870">70</text><text class="m b" x="1500" y="870">75</text><text class="m b" x="1589" y="870">80</text>
</g>
<path d="M176.6 874V1047" stroke="#4f7cc0" stroke-width="1.6"/>
<rect x="165" y="857" width="24" height="17" rx="4" fill="#4772b3"/><text class="m w" x="176.6" y="870">0</text>
<path d="M2 871L5 874 2 877M1604 871L1601 874 1604 877" fill="none" stroke="#888"/>
<rect x="9" y="1049" width="1591" height="8" rx="4" fill="#6a6a6a"/><circle cx="13" cy="1053" r="3" fill="#555"/><circle cx="1596" cy="1053" r="3" fill="#555"/>
<rect x="9" y="833" width="30" height="19" rx="3" fill="#2a2a2a"/><circle cx="20" cy="842" r="6.5" fill="#ddd"/><path d="M20 836L26 842 20 848A9 9 0 0 0 20 836Z" fill="#444"/><use href="#chev" x="33" y="843"/>
<rect x="46" y="833" width="127" height="19" rx="3" fill="#2e2e2e" stroke="#3d3d3d"/><path d="M115 833V852" stroke="#3d3d3d"/>
<text x="53" y="846" textLength="45">Playback</text><use href="#chev" x="108" y="843"/><text x="122" y="846" textLength="35">Keying</text><use href="#chev" x="167" y="843"/>
<text x="183" y="846" textLength="25">View</text><text x="223" y="846" textLength="36">Marker</text>
<rect x="712" y="833" width="18" height="18" rx="3" fill="#545454"/><rect x="731" y="833" width="15" height="18" rx="3" fill="#2a2a2a"/><circle cx="721" cy="842" r="4" fill="#e0e0e0"/><use href="#chev" x="739" y="843" opacity=".4"/>
<rect x="757" y="833" width="118" height="18" rx="3" fill="#545454"/><path d="M776 833V851M796 833V851M815 833V851M835 833V851M855 833V851" stroke="#3e3e3e"/>
<g fill="#e4e4e4"><path d="M762 836H764V848H762ZM771 836V848L765 842Z"/><path d="M780 842L784 838V846ZM785 842L788 838 791 842 788 846ZM792 838V846L796 842" transform="translate(-1 0)"/><path d="M810 835V849L801 842Z"/><path d="M822 835V849L831 842Z"/><path d="M838 838L842 842 838 846ZM846 838L849 842 846 846 843 842ZM850 838V846L854 842Z"/><path d="M860 836L866 842 860 848ZM867 836H869V848H867Z"/></g>
<rect x="1330" y="833" width="73" height="18" rx="3" fill="#545454"/><text class="m" x="1366" y="846">0</text>
<rect x="1411" y="833" width="190" height="18" rx="3" fill="#545454"/><path d="M1428 833V851M1517 833V851" stroke="#3e3e3e"/>
<circle cx="1419.5" cy="843" r="6" fill="none" stroke="#ddd" stroke-width="1.2"/><path d="M1419.5 836V843M1416 834.5H1423" stroke="#ddd" stroke-width="1.2"/>
<text x="1444" y="846" textLength="25">Start</text><text class="m" x="1499" y="846">0</text><text x="1532" y="846" textLength="18">End</text><text class="e" x="1588" y="846" textLength="13">71</text>

<!-- status bar -->
<rect x="0" y="1060" width="1917" height="20" fill="#2b2b2b"/>
<use href="#mouse" x="17" y="1070"/><path d="M12 1070H17V1062A5 5 0 0 0 12 1067Z" fill="#bbb"/><text class="b" x="34" y="1074" textLength="31">Select</text>
<use href="#mouse" x="82" y="1070"/><path d="M77 1070H82V1062A5 5 0 0 0 77 1067Z" fill="#bbb"/><path d="M89 1062V1068M92 1062V1066" stroke="#aaa"/><text class="b" x="100" y="1074" textLength="53">Box Select</text>
<use href="#mouse" x="254" y="1070"/><rect x="252.5" y="1063" width="3" height="6" fill="#ccc"/><text class="b" x="270" y="1074" textLength="60">Rotate View</text>
<use href="#mouse" x="489" y="1070"/><path d="M489 1070H494V1067A5 5 0 0 0 489 1062Z" fill="#bbb"/><text class="b" x="506" y="1074" textLength="105">Object Context Menu</text>
<text class="b" x="1229.5" y="1074" textLength="680.5" lengthAdjust="spacingAndGlyphs">Scene Collection | rings | Verts:264,708 | Faces:274,432 | Tris:528,384 | Objects:1/7 | Memory: 296.0 MiB | VRAM: 1.2/6.0 GiB | 2.93.5</text>
</svg>
</body></html>
